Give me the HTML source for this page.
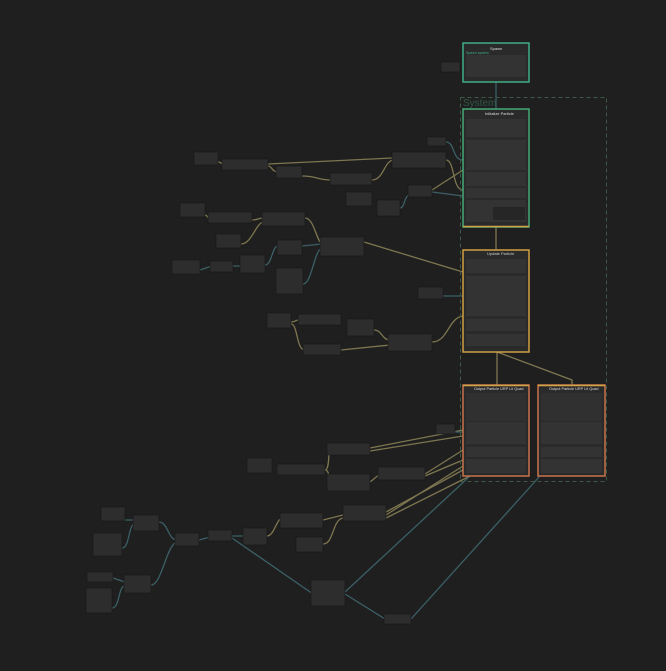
<!DOCTYPE html><html><head><style>html,body{margin:0;padding:0;background:#1f1f1f;width:666px;height:671px;overflow:hidden}svg{display:block}</style></head><body>
<svg width="666" height="671" viewBox="0 0 666 671" xmlns="http://www.w3.org/2000/svg" font-family="Liberation Sans, sans-serif">
<rect width="666" height="671" fill="#1f1f1f"/>
<!-- links -->
<g fill="none" stroke-width="1.3">
<g stroke="#7d7650">
<path d="M218 162 C222 162 220 164 224 164"/>
<path d="M268 166 C272 166 272 172 278 172"/>
<path d="M268 164 L392 158"/>
<path d="M302 176 C318 176 316 180 332 180"/>
<path d="M372 180 C384 180 384 160 394 160"/>
<path d="M446 160 C455 160 452 190 463 190"/>
<path d="M205 215 C208 215 206 218 210 218"/>
<path d="M252 220 C258 220 258 218 264 218"/>
<path d="M241 244 C252 244 256 222 264 222"/>
<path d="M305 218 C314 218 316 240 322 244"/>
<path d="M364 242 L463 272"/>
<path d="M291 322 C296 322 294 320 300 320"/>
<path d="M291 324 C298 324 296 350 305 350"/>
<path d="M341 350 L390 345"/>
<path d="M374 330 C382 330 382 340 390 340"/>
<path d="M432 342 C448 342 448 318 463 316"/>
<path d="M370 448 L463 430"/><path d="M370 451 L463 436"/>
<path d="M325 470 C330 470 328 450 330 448"/><path d="M325 470 C330 470 328 480 330 480"/>
<path d="M370 482 L380 474"/><path d="M425 474 L463 450"/><path d="M425 476 L463 460"/>
<path d="M323 520 L343 515"/><path d="M323 544 C334 544 332 520 343 518"/>
<path d="M267 536 C274 536 276 520 282 518"/>
<path d="M386 512 L463 470"/><path d="M386 515 L463 466"/><path d="M386 518 L470 476"/>
<path d="M496 227 L496 250"/><path d="M497 352 L497 385"/><path d="M497 352 L572 380 L572 385"/>
<path d="M432 190 L463 170"/>
</g>
<g stroke="#3b6066">
<path d="M496 82 L496 109"/>
<path d="M446 142 C455 142 452 160 463 160"/>
<path d="M400 208 C405 208 404 195 410 195"/>
<path d="M432 192 L463 196"/>
<path d="M200 270 L212 266"/><path d="M233 266 L242 266"/>
<path d="M265 265 C272 265 272 246 278 246"/>
<path d="M303 284 C312 284 314 250 322 248"/>
<path d="M302 246 L322 244"/>
<path d="M443 296 L463 296"/>
<path d="M455 432 L463 432"/>
<path d="M125 520 L135 520"/><path d="M122 548 C130 548 128 524 135 524"/>
<path d="M159 522 C168 522 168 540 177 540"/>
<path d="M113 578 L125 582"/><path d="M112 608 C120 608 118 586 125 586"/>
<path d="M151 585 C162 585 166 545 177 542"/>
<path d="M199 540 L210 537"/><path d="M232 536 L244 536"/>
<path d="M232 538 L313 594"/><path d="M345 594 L385 619"/>
<path d="M345 592 L470 476"/><path d="M411 619 L540 476"/>
</g>
</g>
<!-- system box -->
<rect x="460.5" y="97.5" width="146" height="384" fill="none" stroke="#3d5a48" stroke-dasharray="4 3"/>
<text x="463" y="106" font-size="10" fill="#2f5848">System</text>
<!-- contexts -->
<g>
<rect x="463" y="43" width="66" height="39" fill="#2a2a2a" stroke="#3fae86" stroke-width="1.5"/>
<rect x="466" y="55" width="60" height="22" fill="#333"/>
<text x="490" y="50" font-size="4" fill="#ddd">Spawn</text>
<text x="466" y="54" font-size="3.5" fill="#3fae86">Spawn system</text>
<rect x="463" y="109" width="66" height="118" fill="#2a2a2a" stroke="#45a978" stroke-width="1.5"/>
<line x1="463" y1="226.5" x2="529" y2="226.5" stroke="#d2a445" stroke-width="1.5"/>
<text x="485" y="115" font-size="4" fill="#ddd">Initialize Particle</text>
<rect x="466" y="119" width="60" height="18" fill="#333"/><rect x="466" y="140" width="60" height="30" fill="#333"/>
<rect x="466" y="172" width="60" height="14" fill="#333"/><rect x="466" y="188" width="60" height="10" fill="#333"/><rect x="466" y="200" width="60" height="22" fill="#333"/>
<rect x="493" y="207" width="32" height="13" fill="#262626"/>
<rect x="463" y="250" width="66" height="102" fill="#2a2a2a" stroke="#cf9f43" stroke-width="1.5"/>
<text x="487" y="255" font-size="4" fill="#ccc">Update Particle</text>
<rect x="466" y="259" width="60" height="14" fill="#333"/><rect x="466" y="276" width="60" height="40" fill="#333"/><rect x="466" y="319" width="60" height="12" fill="#333"/><rect x="466" y="334" width="60" height="12" fill="#333"/>
<rect x="463" y="385" width="66" height="91" fill="#2a2a2a" stroke="#c8734a" stroke-width="1.5"/>
<line x1="463" y1="385.5" x2="529" y2="385.5" stroke="#d2a445" stroke-width="1.5"/>
<text x="474" y="390" font-size="3.8" fill="#ddd">Output Particle URP Lit Quad</text>
<rect x="466" y="393" width="60" height="28" fill="#303030"/><rect x="466" y="422" width="60" height="22" fill="#333"/><rect x="466" y="447" width="60" height="10" fill="#333"/><rect x="466" y="459" width="60" height="14" fill="#333"/>
<rect x="538" y="385" width="67" height="91" fill="#2a2a2a" stroke="#c8734a" stroke-width="1.5"/>
<line x1="538" y1="385.5" x2="605" y2="385.5" stroke="#d2a445" stroke-width="1.5"/>
<text x="549" y="390" font-size="3.8" fill="#ddd">Output Particle URP Lit Quad</text>
<rect x="541" y="393" width="61" height="28" fill="#303030"/><rect x="541" y="422" width="61" height="22" fill="#333"/><rect x="541" y="447" width="61" height="10" fill="#333"/><rect x="541" y="459" width="61" height="14" fill="#333"/>
</g>
<!-- small nodes -->
<g fill="#2d2d2d" stroke="#151515" stroke-width="0.5">
<rect x="441" y="62" width="19" height="10"/>
<rect x="194" y="152" width="24" height="13"/><rect x="222" y="159" width="46" height="11"/><rect x="276" y="166" width="26" height="12"/><rect x="330" y="173" width="42" height="12"/><rect x="392" y="152" width="54" height="16"/><rect x="427" y="137" width="19" height="9"/><rect x="377" y="200" width="23" height="16"/><rect x="408" y="185" width="24" height="12"/><rect x="346" y="192" width="26" height="14"/>
<rect x="180" y="203" width="25" height="14"/><rect x="208" y="212" width="44" height="11"/><rect x="262" y="212" width="43" height="14"/><rect x="216" y="234" width="25" height="14"/><rect x="240" y="255" width="25" height="18"/><rect x="277" y="240" width="25" height="15"/><rect x="276" y="268" width="27" height="26"/><rect x="320" y="237" width="44" height="19"/><rect x="172" y="260" width="28" height="14"/><rect x="210" y="261" width="23" height="11"/>
<rect x="267" y="313" width="24" height="15"/><rect x="298" y="314" width="43" height="11"/><rect x="347" y="319" width="27" height="17"/><rect x="303" y="344" width="38" height="11"/><rect x="388" y="334" width="44" height="17"/><rect x="418" y="287" width="25" height="12"/>
<rect x="327" y="443" width="43" height="12"/><rect x="247" y="458" width="25" height="15"/><rect x="277" y="464" width="48" height="11"/><rect x="327" y="474" width="43" height="17"/><rect x="378" y="467" width="47" height="13"/><rect x="436" y="424" width="19" height="10"/>
<rect x="101" y="507" width="24" height="14"/><rect x="93" y="533" width="29" height="23"/><rect x="133" y="515" width="26" height="16"/><rect x="175" y="533" width="24" height="13"/><rect x="208" y="530" width="24" height="11"/><rect x="243" y="528" width="24" height="17"/><rect x="280" y="513" width="43" height="15"/><rect x="296" y="537" width="27" height="15"/><rect x="343" y="505" width="43" height="16"/><rect x="87" y="572" width="26" height="10"/><rect x="86" y="588" width="26" height="25"/><rect x="124" y="575" width="27" height="18"/><rect x="311" y="580" width="34" height="26"/><rect x="384" y="614" width="27" height="10"/>
</g>
</svg>
</body></html>
